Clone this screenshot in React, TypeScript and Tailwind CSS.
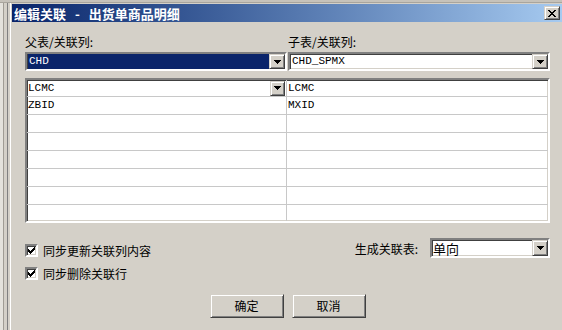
const cjk = "[font-family:'Noto_Sans_CJK_SC',sans-serif]";
const mono = "[font-family:'Liberation_Mono','Courier_New',monospace]";

const sunken =
  'border-2 border-t-[#808080] border-l-[#808080] border-b-white border-r-white shadow-[inset_1px_1px_0_#404040,inset_-1px_-1px_0_#d4d0c8]';
const raised =
  'border border-t-[#d4d0c8] border-l-[#d4d0c8] border-b-[#404040] border-r-[#404040] shadow-[inset_1px_1px_0_#ffffff,inset_-1px_-1px_0_#808080] bg-[#d4d0c8]';

function Arrow() {
  return (
    <svg width="7" height="4" shapeRendering="crispEdges">
      <rect x="0" y="0" width="7" height="1" fill="#000" />
      <rect x="1" y="1" width="5" height="1" fill="#000" />
      <rect x="2" y="2" width="3" height="1" fill="#000" />
      <rect x="3" y="3" width="1" height="1" fill="#000" />
    </svg>
  );
}

function DropButton({ className = '' }: { className?: string }) {
  return (
    <div className={`${raised} flex items-center justify-center shrink-0 ${className}`}>
      <Arrow />
    </div>
  );
}

function Combo({ value, selected, className = '' }: { value: string; selected?: boolean; className?: string }) {
  return (
    <div className={`${sunken} bg-white flex items-stretch ${className}`}>
      <div className="flex-1 flex items-center pl-px">
        <span
          className={`h-full flex-1 flex items-center pl-[1px] text-[11px] leading-none ${mono} ${
            selected ? 'bg-[#0a246a] text-white' : 'text-black'
          }`}
        >
          {value}
        </span>
      </div>
      <DropButton className="w-[16px]" />
    </div>
  );
}

function CheckMark() {
  return (
    <svg width="7" height="7" shapeRendering="crispEdges">
      <rect x="6" y="0" width="1" height="1" />
      <rect x="5" y="1" width="2" height="1" />
      <rect x="0" y="2" width="1" height="1" />
      <rect x="4" y="2" width="3" height="1" />
      <rect x="0" y="3" width="2" height="1" />
      <rect x="3" y="3" width="3" height="1" />
      <rect x="0" y="4" width="5" height="1" />
      <rect x="1" y="5" width="3" height="1" />
      <rect x="2" y="6" width="1" height="1" />
    </svg>
  );
}

function Checkbox({ label }: { label: string }) {
  return (
    <div className="flex items-center h-[13px] gap-[5px]">
      <div className={`${sunken} bg-white w-[13px] h-[13px] flex items-center justify-center`}>
        <CheckMark />
      </div>
      <span className={`${cjk} text-[12px] leading-none text-black`}>{label}</span>
    </div>
  );
}

function CloseX() {
  return (
    <svg width="8" height="7" shapeRendering="crispEdges">
      <rect x="0" y="0" width="2" height="1" />
      <rect x="6" y="0" width="2" height="1" />
      <rect x="1" y="1" width="2" height="1" />
      <rect x="5" y="1" width="2" height="1" />
      <rect x="2" y="2" width="4" height="1" />
      <rect x="3" y="3" width="2" height="1" />
      <rect x="2" y="4" width="4" height="1" />
      <rect x="1" y="5" width="2" height="1" />
      <rect x="5" y="5" width="2" height="1" />
      <rect x="0" y="6" width="2" height="1" />
      <rect x="6" y="6" width="2" height="1" />
    </svg>
  );
}

const rows = [
  ['LCMC', 'LCMC'],
  ['ZBID', 'MXID'],
  ['', ''],
  ['', ''],
  ['', ''],
  ['', ''],
  ['', ''],
  ['', ''],
];

export default function App() {
  return (
    <div className="w-[562px] h-[330px] overflow-hidden bg-[#d4d0c8] flex flex-col">
      <div className="h-[3px] bg-[#c6c2ba] border-b border-[#a9a59d] shrink-0" />
      <div className="flex flex-1">
        <div className="w-[10px] flex shrink-0">
          <div className="w-[3px] bg-[#e4e2dc]" />
          <div className="w-px bg-[#a09c94]" />
          <div className="w-[3px] bg-[#d4d0c8]" />
          <div className="w-px bg-[#808080]" />
          <div className="w-[2px] bg-[#d4d0c8]" />
        </div>
        <div className="flex-1 flex flex-col border-l border-white pl-px">
          <div className="h-[18px] mt-px bg-gradient-to-r from-[#0a246a] to-[#a6caf0] flex items-center justify-between pl-[2px] pr-[2px]">
            <span className={`${cjk} text-[13px] font-bold text-white leading-none`}>
              编辑关联<span className="mx-[9px]">-</span>出货单商品明细
            </span>
            <div className={`${raised} w-[16px] h-[14px] flex items-center justify-center`}>
              <CloseX />
            </div>
          </div>

          <div className="pl-[13px] w-[538px]">
            <div className="grid grid-cols-2 gap-px mt-[12px] h-[16px] items-center">
              <span className={`${cjk} text-[12px] leading-none text-black`}>父表/关联列:</span>
              <span className={`${cjk} text-[12px] leading-none text-black`}>子表/关联列:</span>
            </div>
            <div className="grid grid-cols-2 gap-px mt-[2px]">
              <Combo value="CHD" selected className="h-[19px]" />
              <Combo value="CHD_SPMX" className="h-[19px]" />
            </div>

            <div className={`${sunken} bg-white mt-[7px] h-[145px] overflow-hidden`}>
              {rows.map((r, i) => (
                <div
                  key={i}
                  className={`flex border-b border-[#c8c8c8] ${i === 0 ? 'h-[17px]' : 'h-[18px]'}`}
                >
                  <div className="w-[260px] border-r border-[#c8c8c8] flex items-center pl-px">
                    <span className={`${mono} text-[11px] leading-none text-black flex-1`}>{r[0]}</span>
                    {i === 0 && <DropButton className="w-[15px] h-[15px] mr-px" />}
                  </div>
                  <div className="flex-1 flex items-center pl-px">
                    <span className={`${mono} text-[11px] leading-none text-black`}>{r[1]}</span>
                  </div>
                </div>
              ))}
            </div>

            <div className="flex justify-between mt-[15px]">
              <div className="flex flex-col pt-[6px] gap-[10px]">
                <Checkbox label="同步更新关联列内容" />
                <Checkbox label="同步删除关联行" />
              </div>
              <div className="flex items-start h-[20px]">
                <span className={`${cjk} text-[12px] leading-none text-black mt-[5px] mr-[12px]`}>生成关联表:</span>
                <div className={`${sunken} bg-white w-[120px] h-[20px] flex items-stretch`}>
                  <span className={`${cjk} flex-1 flex items-center pl-px text-[13px] leading-none text-black`}>单向</span>
                  <DropButton className="w-[16px]" />
                </div>
              </div>
            </div>

            <div className="flex justify-center gap-[8px] mt-[14px]">
              <button className={`${raised} ${cjk} w-[74px] h-[24px] text-[12px] text-black leading-none`}>确定</button>
              <button className={`${raised} ${cjk} w-[74px] h-[24px] text-[12px] text-black leading-none`}>取消</button>
            </div>
          </div>
        </div>
      </div>
    </div>
  );
}
